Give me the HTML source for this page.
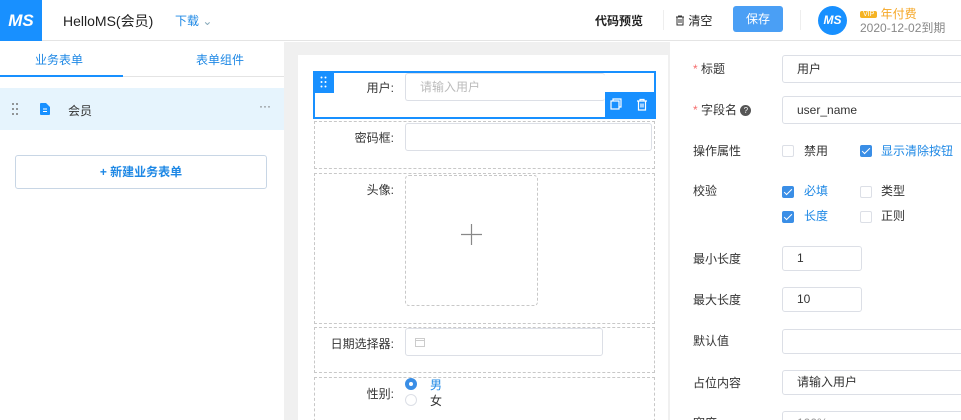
<!DOCTYPE html>
<html><head><meta charset="utf-8"><style>
*{box-sizing:border-box;margin:0;padding:0}
html,body{width:961px;height:420px;overflow:hidden}
body{font-family:"Liberation Sans","Noto Sans CJK SC",sans-serif;font-size:12px;color:#333;background:#fff;position:relative}
.a{position:absolute}
.hdr{left:0;top:0;width:961px;height:41px;border-bottom:1px solid #e4e4e4;background:#fff}
.inp{position:absolute;border:1px solid #dcdfe6;border-radius:3px;background:#fff;height:28px;line-height:26px;padding-left:14px;color:#333}
.dash{position:absolute;border:1px dashed #c8c8c8}
.lbl{position:absolute;text-align:right;color:#333}
.cb{position:absolute;width:12px;height:12px;border:1px solid #dcdfe6;border-radius:2px;background:#fff}
.cb.on{background:#3a8ee6;border-color:#3a8ee6}
.cb.on:after{content:"";position:absolute;left:3px;top:0px;width:3px;height:7px;border:solid #fff;border-width:0 1.5px 1.5px 0;transform:rotate(45deg)}
.blue{color:#1e88e5}
.r{line-height:16px}
</style></head><body>
<div class="a hdr"></div>
<div class="a" style="left:0;top:0;width:42px;height:41px;background:#1890ff;color:#fff;font-weight:bold;font-style:italic;font-size:17px;line-height:41px;text-align:center">MS</div>
<div class="a" style="left:63px;top:11px;font-size:14px;color:#222">HelloMS(会员)</div>
<div class="a blue" style="left:175px;top:12px;font-size:12px">下载 <span style="color:#8ab">⌄</span></div>
<div class="a" style="left:595px;top:12px;font-weight:bold;color:#222">代码预览</div>
<div class="a" style="left:663px;top:10px;width:1px;height:20px;background:#eee"></div>
<div class="a" style="left:675px;top:12px;color:#222"><svg width="10" height="11" viewBox="0 0 10 11" style="vertical-align:-1px"><path d="M1 2h8M3.5 2V1h3v1M2 2v8h6V2M4 4v4M6 4v4" fill="none" stroke="#333" stroke-width="1"/></svg> 清空</div>
<div class="a" style="left:733px;top:6px;width:50px;height:26px;background:#4a9ff5;border-radius:3px;color:#fff;text-align:center;line-height:26px">保存</div>
<div class="a" style="left:800px;top:10px;width:1px;height:20px;background:#eee"></div>
<div class="a" style="left:818px;top:6px;width:29px;height:29px;border-radius:50%;background:#1890ff;color:#fff;font-weight:bold;font-style:italic;font-size:12px;line-height:29px;text-align:center">MS</div>
<div class="a" style="left:860px;top:5px;color:#f5a623;font-size:12px"><span style="background:#f5b323;color:#fff;font-size:7px;padding:0 3px;border-radius:2px;vertical-align:2px">VIP</span> 年付费</div>
<div class="a" style="left:860px;top:19px;color:#888;font-size:12px">2020-12-02到期</div>

<!-- left -->
<div class="a" style="left:284px;top:42px;width:386px;height:378px;background:#f0f0f0"></div>
<div class="a blue" style="left:35px;top:51px">业务表单</div>
<div class="a blue" style="left:196px;top:51px">表单组件</div>
<div class="a" style="left:0;top:76px;width:284px;height:1px;background:#e4e4e4"></div>
<div class="a" style="left:0;top:75px;width:123px;height:2px;background:#1890ff"></div>
<div class="a" style="left:0;top:88px;width:284px;height:42px;background:#e6f4fd"></div>
<svg class="a" style="left:11px;top:102px" width="8" height="14"><g fill="#777"><circle cx="2" cy="2" r="1"/><circle cx="6" cy="2" r="1"/><circle cx="2" cy="7" r="1"/><circle cx="6" cy="7" r="1"/><circle cx="2" cy="12" r="1"/><circle cx="6" cy="12" r="1"/></g></svg>
<svg class="a" style="left:40px;top:103px" width="10" height="12"><path d="M0 1a1 1 0 0 1 1-1h5l4 4v7a1 1 0 0 1-1 1H1a1 1 0 0 1-1-1z" fill="#1890ff"/><path d="M3 6h4M3 8.5h4" stroke="#fff"/></svg>
<div class="a" style="left:68px;top:102px">会员</div>
<div class="a" style="left:259px;top:99px;color:#666">···</div>
<div class="a blue" style="left:15px;top:155px;width:252px;height:34px;border:1px solid #c8d6e5;border-radius:3px;text-align:center;line-height:32px;font-weight:bold">+ 新建业务表单</div>

<!-- canvas -->
<div class="a" style="left:298px;top:55px;width:370px;height:365px;background:#fff"></div>
<div class="a" style="left:313px;top:71px;width:343px;height:48px;border:2px solid #1890ff"></div>
<div class="a" style="left:313px;top:71px;width:21px;height:22px;background:#1890ff"></div>
<svg class="a" style="left:320px;top:76px" width="7" height="12"><g fill="#fff"><circle cx="1.5" cy="1.5" r="1"/><circle cx="5.5" cy="1.5" r="1"/><circle cx="1.5" cy="6" r="1"/><circle cx="5.5" cy="6" r="1"/><circle cx="1.5" cy="10.5" r="1"/><circle cx="5.5" cy="10.5" r="1"/></g></svg>
<div class="a" style="left:605px;top:92px;width:51px;height:27px;background:#1890ff"></div>
<svg class="a" style="left:610px;top:98px" width="40" height="14"><g fill="none" stroke="#fff" stroke-width="1.2"><rect x="1" y="3" width="8" height="8"/><path d="M3 3V1h8v8H9"/><path d="M27 3h10M30 3V1.5h4V3M28.5 3v9h7V3M31 5.5v4M33 5.5v4"/></g></svg>
<div class="lbl" style="left:330px;top:79px;width:64px">用户:</div>
<div class="inp" style="left:405px;top:73px;width:200px;color:#bbb;border-right:none">请输入用户</div>
<div class="dash" style="left:314px;top:121px;width:341px;height:48px"></div>
<div class="lbl" style="left:330px;top:129px;width:64px">密码框:</div>
<div class="inp" style="left:405px;top:123px;width:247px"></div>
<div class="dash" style="left:314px;top:173px;width:341px;height:151px"></div>
<div class="lbl" style="left:330px;top:181px;width:64px">头像:</div>
<div class="a" style="left:405px;top:175px;width:133px;height:131px;border:1px dashed #c8c8c8;border-radius:4px"></div>
<svg class="a" style="left:461px;top:224px" width="21" height="21"><path d="M10.5 0v21M0 10.5h21" stroke="#888" stroke-width="1.2"/></svg>
<div class="dash" style="left:314px;top:327px;width:341px;height:46px"></div>
<div class="lbl" style="left:320px;top:335px;width:74px">日期选择器:</div>
<div class="inp" style="left:405px;top:328px;width:198px"></div>
<svg class="a" style="left:415px;top:337px" width="10" height="10"><rect x="0.5" y="1.5" width="9" height="8" fill="none" stroke="#ccc"/><path d="M0.5 3.5h9" stroke="#ccc"/></svg>
<div class="dash" style="left:314px;top:377px;width:341px;height:50px"></div>
<div class="lbl" style="left:330px;top:385px;width:64px">性别:</div>
<div class="a" style="left:405px;top:378px;width:12px;height:12px;border-radius:50%;border:4px solid #3a8ee6;background:#fff"></div>
<div class="a" style="left:405px;top:394px;width:12px;height:12px;border-radius:50%;border:1px solid #dcdfe6"></div>
<div class="a blue" style="left:430px;top:376px">男</div>
<div class="a" style="left:430px;top:392px">女</div>

<!-- right -->
<div class="a r" style="left:693px;top:61px"><span style="color:#f56c6c">*</span> 标题</div>
<div class="inp" style="left:782px;top:55px;width:190px">用户</div>
<div class="a r" style="left:693px;top:102px"><span style="color:#f56c6c">*</span> 字段名 <span style="display:inline-block;width:11px;height:11px;border-radius:50%;background:#555;color:#fff;font-size:8px;text-align:center;line-height:11px;vertical-align:1px">?</span></div>
<div class="inp" style="left:782px;top:96px;width:190px">user_name</div>
<div class="a r" style="left:693px;top:143px">操作属性</div>
<div class="cb" style="left:782px;top:145px"></div><div class="a r" style="left:804px;top:143px">禁用</div>
<div class="cb on" style="left:860px;top:145px"></div><div class="a blue r" style="left:881px;top:143px">显示清除按钮</div>
<div class="a r" style="left:693px;top:183px">校验</div>
<div class="cb on" style="left:782px;top:186px"></div><div class="a blue r" style="left:804px;top:183px">必填</div>
<div class="cb" style="left:860px;top:186px"></div><div class="a r" style="left:881px;top:183px">类型</div>
<div class="cb on" style="left:782px;top:211px"></div><div class="a blue r" style="left:804px;top:208px">长度</div>
<div class="cb" style="left:860px;top:211px"></div><div class="a r" style="left:881px;top:208px">正则</div>
<div class="a r" style="left:693px;top:251px">最小长度</div>
<div class="inp" style="left:782px;top:246px;width:80px;height:25px;line-height:23px">1</div>
<div class="a r" style="left:693px;top:292px">最大长度</div>
<div class="inp" style="left:782px;top:287px;width:80px;height:25px;line-height:23px">10</div>
<div class="a r" style="left:693px;top:333px">默认值</div>
<div class="inp" style="left:782px;top:329px;width:190px;height:25px"></div>
<div class="a r" style="left:693px;top:375px">占位内容</div>
<div class="inp" style="left:782px;top:370px;width:190px;height:25px;line-height:23px">请输入用户</div>
<div class="a r" style="left:693px;top:415px">宽度</div>
<div class="inp" style="left:782px;top:411px;width:190px;height:25px;line-height:23px;color:#999">100%</div>
</body></html>
